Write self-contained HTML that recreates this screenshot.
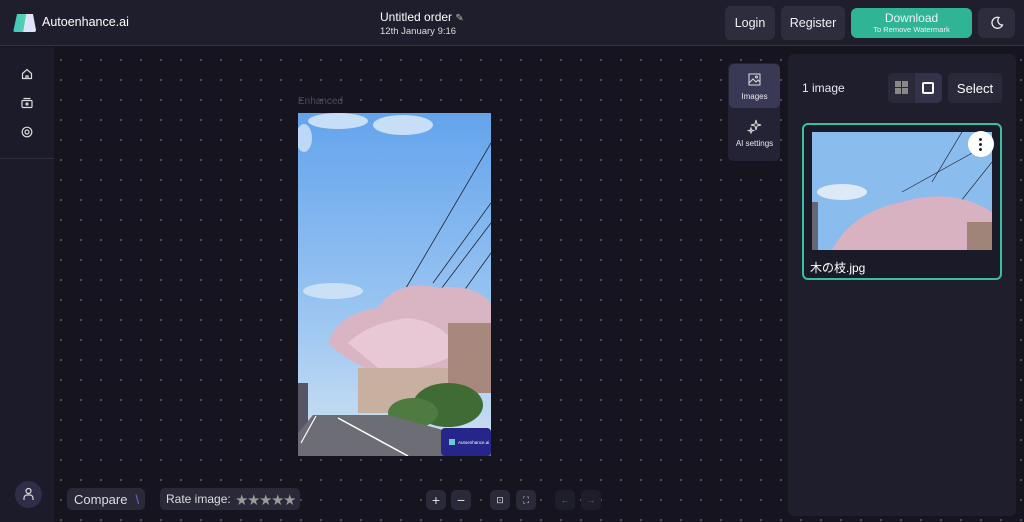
<!DOCTYPE html>
<html><head><meta charset="utf-8"><style>
*{box-sizing:border-box;margin:0;padding:0}
html,body{width:1024px;height:522px;overflow:hidden}
body{background:#16151f;font-family:"Liberation Sans","Noto Sans CJK JP",sans-serif;color:#e8e8f0;position:relative}
.hdr{position:absolute;left:0;top:0;width:1024px;height:46px;background:#1f1e2d;border-bottom:1px solid #34334a}
.side{position:absolute;left:0;top:47px;width:54px;height:475px;background:#1c1b29}
.canvas{position:absolute;left:54px;top:47px;width:970px;height:475px;background-color:#16151f;background-image:radial-gradient(circle,#55546a 0.8px,transparent 1.2px);background-size:20px 20px;background-position:-3px 3px}
.btn{position:absolute;background:#2e2d3e;border-radius:6px;font-size:12.5px;color:#f0f0f5;display:flex;align-items:center;justify-content:center}
.panel{position:absolute;left:788px;top:54px;width:228px;height:462px;background:#1f1e2d;border-radius:6px}
.tb{position:absolute;background:#2a2939;border-radius:5px;color:#ddd;font-size:13px;display:flex;align-items:center;justify-content:center}
</style></head><body>
<div class="hdr">
 <svg style="position:absolute;left:13px;top:13px" width="24" height="20" viewBox="0 0 24 20"><defs><linearGradient id="lg" x1="0" x2="1"><stop offset="0" stop-color="#3fc5c0"/><stop offset="1" stop-color="#5ad4a8"/></linearGradient></defs><path d="M4 1h9l-3 18H2a1.5 1.5 0 0 1-1.5-2z" fill="url(#lg)"/><path d="M13 1h7l3 16a2 2 0 0 1-2 2H10z" fill="#dfe4f8"/></svg>
 <div style="position:absolute;left:42px;top:15px;font-size:12.5px;color:#fff">Autoenhance.ai</div>
 <div style="position:absolute;left:380px;top:10px;font-size:12px;color:#fff">Untitled order <span style="font-size:10px;color:#bbb">✎</span></div>
 <div style="position:absolute;left:380px;top:26px;font-size:9.5px;color:#ddd">12th January 9:16</div>
 <div class="btn" style="left:725px;top:6px;width:50px;height:34px">Login</div>
 <div class="btn" style="left:781px;top:6px;width:64px;height:34px">Register</div>
 <div class="btn" style="left:851px;top:8px;width:121px;height:30px;background:#2fb596;flex-direction:column;line-height:1"><div style="font-size:12px">Download</div><div style="font-size:7.5px;margin-top:2px">To Remove Watermark</div></div>
 <div class="btn" style="left:978px;top:8px;width:37px;height:30px"><svg width="14" height="14" viewBox="0 0 14 14"><path d="M9 1.5A5.5 5.5 0 1 0 12.5 9 4.5 4.5 0 0 1 9 1.5z" fill="none" stroke="#eee" stroke-width="1.3"/></svg></div>
</div>
<div class="side">
 <svg style="position:absolute;left:21px;top:21px" width="12" height="12" viewBox="0 0 12 12" fill="none" stroke="#ddd" stroke-width="1.2"><path d="M1.5 5.5L6 1.5l4.5 4v5h-9z"/><path d="M5 10.5V8h2v2.5"/></svg>
 <svg style="position:absolute;left:21px;top:50px" width="12" height="12" viewBox="0 0 12 12" fill="none" stroke="#ddd" stroke-width="1.2"><rect x="1" y="3.5" width="10" height="7" rx="1"/><path d="M2.5 1.5h7"/><circle cx="6" cy="7" r="1"/></svg>
 <svg style="position:absolute;left:21px;top:79px" width="12" height="12" viewBox="0 0 12 12" fill="none" stroke="#ddd" stroke-width="1.2"><circle cx="6" cy="6" r="4.8"/><circle cx="6" cy="6" r="2"/></svg>
 <div style="position:absolute;left:0;top:111px;width:54px;border-top:1px solid #2e2d40"></div>
 <div style="position:absolute;left:15px;top:434px;width:27px;height:27px;border-radius:50%;background:#2f2e48"><svg style="position:absolute;left:7px;top:6px" width="13" height="14" viewBox="0 0 13 14" fill="none" stroke="#ddd" stroke-width="1.2"><circle cx="6.5" cy="4" r="2.5"/><path d="M2 13v-2a3 3 0 0 1 3-3h3a3 3 0 0 1 3 3v2"/></svg></div>
</div>
<div class="canvas"></div>
<div style="position:absolute;left:298px;top:96px;font-size:10px;color:#4a4a5a">Enhanced</div>
<svg style="position:absolute;left:298px;top:113px" width="193" height="343" viewBox="0 0 193 343">
 <defs><linearGradient id="sky" x1="0" y1="0" x2="0" y2="1"><stop offset="0" stop-color="#64a4ec"/><stop offset="0.6" stop-color="#9cc6f2"/><stop offset="1" stop-color="#d0e2f2"/></linearGradient></defs>
 <rect width="193" height="343" fill="url(#sky)"/>
 <ellipse cx="40" cy="8" rx="30" ry="8" fill="#e0ecfa" opacity=".8"/><ellipse cx="105" cy="12" rx="30" ry="10" fill="#e0ecfa" opacity=".8"/>
 <ellipse cx="6" cy="25" rx="8" ry="14" fill="#e0ecfa" opacity=".7"/>
 <ellipse cx="35" cy="178" rx="30" ry="8" fill="#e0ecfa" opacity=".7"/>
 <path d="M193 30 L105 180 M193 90 L135 170 M193 110 L140 180 M193 140 L150 200" stroke="#223" stroke-width="0.8"/>
 <path d="M30 230 Q40 200 80 195 Q100 165 140 175 Q175 170 193 190 L193 250 Q150 275 110 265 Q60 260 30 230z" fill="#d9b5c4"/>
 <path d="M50 230 Q70 210 110 205 Q150 210 160 240 Q120 262 80 255z" fill="#e8c8d4"/>
 <rect x="150" y="210" width="43" height="70" fill="#a8887c"/>
 <rect x="60" y="255" width="90" height="45" fill="#c8b0a0"/>
 <ellipse cx="150" cy="292" rx="35" ry="22" fill="#3f6b35"/>
 <ellipse cx="115" cy="300" rx="25" ry="15" fill="#4f7a40"/>
 <rect x="0" y="270" width="10" height="60" fill="#556"/>
 <path d="M0 343 L0 320 L15 302 L90 302 L193 330 L193 343z" fill="#6d6d75"/>
 <path d="M40 305 L110 343" stroke="#fff" stroke-width="1.5"/><path d="M18 303 L3 330" stroke="#fff" stroke-width="1.2"/>
 <rect x="143" y="315" width="50" height="28" rx="4" fill="#26268a"/>
 <rect x="151" y="326" width="6" height="6" fill="#6cc"/><text x="160" y="331" font-size="4.5" fill="#fff" font-family="Liberation Sans">Autoenhance.ai</text>
</svg>
<div style="position:absolute;left:728px;top:63px;width:52px;height:98px;background:#242335;border-radius:5px"></div>
<div style="position:absolute;left:729px;top:64px;width:51px;height:44px;background:#3a3955;border-radius:5px;font-size:8px;text-align:center;padding-top:28px">Images</div>
<svg style="position:absolute;left:748px;top:73px" width="13" height="13" viewBox="0 0 13 13" fill="none" stroke="#ddd" stroke-width="1"><rect x="1" y="1" width="11" height="11"/><path d="M1 10l4-4 3 3 2-2 2 2"/><circle cx="8.5" cy="4" r="1"/></svg>
<svg style="position:absolute;left:747px;top:119px" width="15" height="15" viewBox="0 0 15 15" fill="none" stroke="#ddd" stroke-width="1"><path d="M9 1l1 4 4 1-4 1-1 4-1-4-4-1 4-1z"/><path d="M4 9l.6 2 2 .6-2 .6L4 14l-.6-1.8-2-.6 2-.6z"/></svg>
<div style="position:absolute;left:729px;top:139px;width:51px;font-size:8px;text-align:center">AI settings</div>
<div class="panel"></div>
<div style="position:absolute;left:802px;top:81px;font-size:12px">1 image</div>
<div class="tb" style="left:888px;top:73px;width:54px;height:30px"></div>
<svg style="position:absolute;left:895px;top:81px" width="13" height="13" viewBox="0 0 13 13" fill="#888"><rect width="6" height="6"/><rect x="7" width="6" height="6"/><rect y="7" width="6" height="6"/><rect x="7" y="7" width="6" height="6"/></svg>
<div style="position:absolute;left:915px;top:73px;width:27px;height:30px;background:#33324a;border-radius:0 5px 5px 0"></div>
<div style="position:absolute;left:922px;top:82px;width:12px;height:12px;border:2px solid #fff;border-radius:2px"></div>
<div class="tb" style="left:948px;top:73px;width:54px;height:30px;color:#fff">Select</div>
<div style="position:absolute;left:802px;top:123px;width:200px;height:157px;border:2px solid #3bbf9f;border-radius:6px;background:#1b1a28"></div>
<svg style="position:absolute;left:812px;top:132px" width="180" height="118" viewBox="0 0 180 118">
 <rect width="180" height="118" fill="#8abcee"/>
 <ellipse cx="30" cy="60" rx="25" ry="8" fill="#dde9f6"/>
 <path d="M180 30 L110 118 M180 10 L90 60 M150 0 L120 50" stroke="#223" stroke-width=".7"/>
 <path d="M20 118 Q40 80 90 70 Q140 55 180 80 L180 118z" fill="#d8b2c0"/>
 <rect x="155" y="90" width="25" height="28" fill="#a08478"/>
 <rect x="0" y="70" width="6" height="48" fill="#667"/>
</svg>
<div style="position:absolute;left:968px;top:131px;width:26px;height:26px;border-radius:50%;background:#fff"><div style="position:absolute;left:11px;top:6px;width:3px;height:14px;background:radial-gradient(circle,#222 1.3px,transparent 1.6px);background-size:3px 5px"></div></div>
<div style="position:absolute;left:810px;top:259px;font-size:12px;color:#fff">木の枝.jpg</div>
<div class="tb" style="left:67px;top:488px;width:78px;height:22px;justify-content:flex-start;padding-left:7px">Compare <span style="color:#6a6adc;margin-left:8px">\</span></div>
<div class="tb" style="left:160px;top:488px;width:140px;height:22px;justify-content:flex-start;padding-left:6px;font-size:12px">Rate image: <span style="color:#999;margin-left:5px">★★★★★</span></div>
<div class="tb" style="left:426px;top:490px;width:20px;height:20px;font-size:14px">+</div>
<div class="tb" style="left:451px;top:490px;width:20px;height:20px;font-size:14px">−</div>
<div class="tb" style="left:490px;top:490px;width:20px;height:20px;font-size:9px">⊡</div>
<div class="tb" style="left:516px;top:490px;width:20px;height:20px;font-size:9px">⛶</div>
<div class="tb" style="left:555px;top:490px;width:20px;height:20px;font-size:9px;color:#666;background:#1e1d2a">←</div>
<div class="tb" style="left:581px;top:490px;width:20px;height:20px;font-size:9px;color:#666;background:#1e1d2a">→</div>
</body></html>
